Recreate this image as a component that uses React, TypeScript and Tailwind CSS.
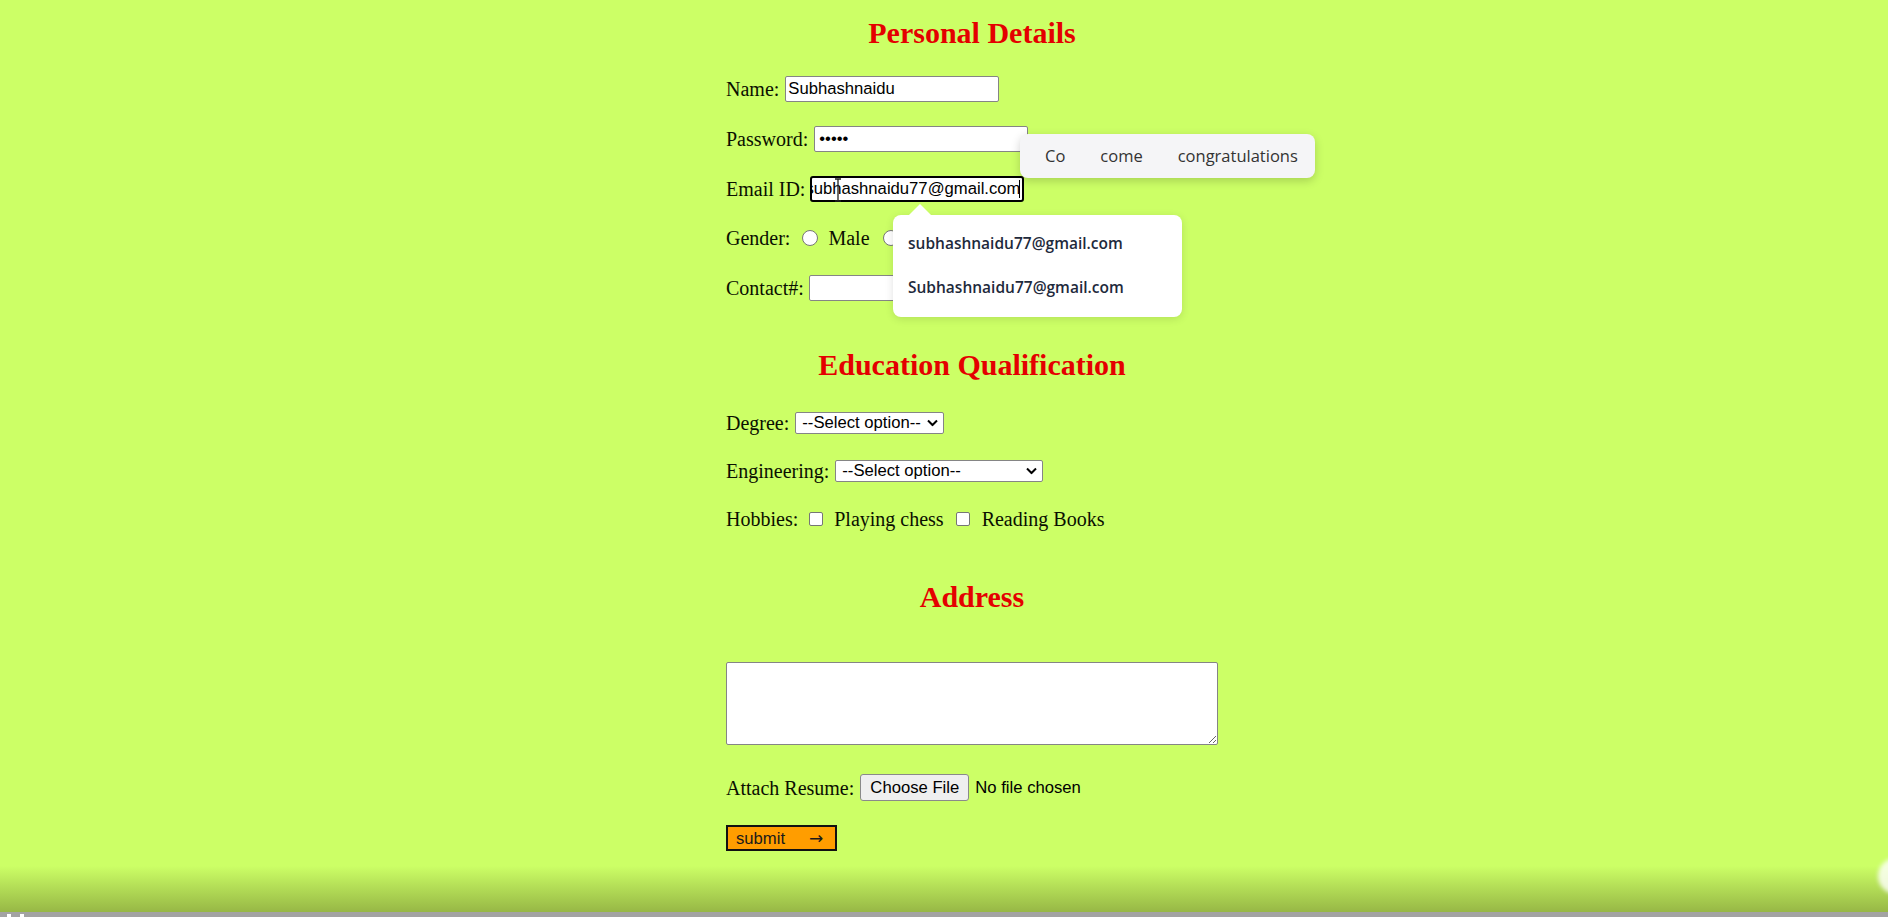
import React from "react";

const fieldCls =
  "h-[26px] w-[214px] rounded-[2px] border border-[#858585] bg-white px-[2px] font-['Liberation_Sans',Arial,sans-serif] text-[16.67px] text-black outline-none";

const Heading: React.FC<{ children: React.ReactNode; className?: string }> = ({ children, className = "" }) => (
  <h2 className={`text-center text-[30px] font-bold leading-[34px] text-[#e40000] ${className}`}>{children}</h2>
);

const Chevron = () => (
  <svg width="11" height="7" viewBox="0 0 11 7" className="pointer-events-none absolute right-[6px] top-1/2 -translate-y-1/2">
    <path d="M1 1 L5.5 5.5 L10 1" fill="none" stroke="#000" strokeWidth="2" />
  </svg>
);

const FakeSelect: React.FC<{ width: string }> = ({ width }) => (
  <div className={`relative ml-[6px] h-[22px] ${width}`}>
    <select
      defaultValue=""
      className="block h-full w-full appearance-none rounded-[2px] border border-[#858585] bg-white pl-[6px] font-['Liberation_Sans',Arial,sans-serif] text-[16.67px] leading-[20px] text-black outline-none"
    >
      <option value="">--Select option--</option>
    </select>
    <Chevron />
  </div>
);

const radioCls = "h-[16px] w-[16px] appearance-none rounded-full border border-[#767676] bg-white";
const checkCls = "h-[14px] w-[14px] appearance-none rounded-[2px] border border-[#767676] bg-white";

export default function App() {
  return (
    <div className="relative min-h-screen overflow-hidden bg-[#ccff66] font-['Liberation_Serif','Times_New_Roman',serif] text-[20px] text-[#0a0f00]">
      <div className="pl-[726px] pt-[16px]">
        <form className="w-[492px]" onSubmit={(e) => e.preventDefault()}>
          <Heading>Personal Details</Heading>

          <div className="mt-[26px] flex flex-col gap-[23.75px]">
            <div className="flex h-[26px] items-center">
              <label>Name:</label>
              <input className={`${fieldCls} ml-[6px] w-[213px]`} defaultValue="Subhashnaidu" />
            </div>
            <div className="flex h-[26px] items-center">
              <label>Password:</label>
              <input type="password" className={`${fieldCls} ml-[6px] pl-[4px]`} defaultValue="12345" />
            </div>
            <div className="flex h-[26px] items-center">
              <label>Email ID:</label>
              {/* focused field, scrolled to the end of the value */}
              <div className="relative ml-[5px] flex h-[26px] w-[214px] items-center justify-end overflow-hidden rounded-[3px] border-2 border-black bg-white font-['Liberation_Sans',Arial,sans-serif] text-[16.67px] whitespace-nowrap text-black">
                <span className="-mr-[1px]">subhashnaidu77@gmail.com</span>
                <span className="mr-[2px] h-[18px] w-[1px] shrink-0 bg-black" />
              </div>
            </div>
            <div className="flex h-[26px] items-center">
              <label>Gender:</label>
              <input type="radio" name="gender" className={`${radioCls} ml-[12px]`} />
              <span className="ml-[10px]">Male</span>
              <input type="radio" name="gender" className={`${radioCls} ml-[13px]`} />
              <span className="ml-[10px]">Female</span>
            </div>
            <div className="flex h-[26px] items-center">
              <label>Contact#:</label>
              <input className={`${fieldCls} ml-[5px]`} />
            </div>
          </div>

          <Heading className="mt-[47px]">Education Qualification</Heading>

          <div className="mt-[29px] flex flex-col gap-[24px]">
            <div className="flex h-[24px] items-center">
              <label>Degree:</label>
              <FakeSelect width="w-[149px]" />
            </div>
            <div className="flex h-[24px] items-center">
              <label>Engineering:</label>
              <FakeSelect width="w-[208px]" />
            </div>
            <div className="flex h-[24px] items-center">
              <label>Hobbies:</label>
              <input type="checkbox" className={`${checkCls} ml-[11px]`} />
              <span className="ml-[11px]">Playing chess</span>
              <input type="checkbox" className={`${checkCls} ml-[12px]`} />
              <span className="ml-[12px]">Reading Books</span>
            </div>
          </div>

          <Heading className="mt-[49px]">Address</Heading>

          <textarea className="mt-[48px] block h-[83px] w-[492px] rounded-[2px] border border-[#858585] bg-white outline-none" />

          <div className="mt-[29px] flex h-[27px] items-center">
            <label>Attach Resume:</label>
            <button
              type="button"
              className="ml-[6px] h-[27px] w-[109px] rounded-[3px] border border-[#8a8a8a] bg-[#efefef] font-['Liberation_Sans',Arial,sans-serif] text-[16.67px] text-black"
            >
              Choose File
            </button>
            <span className="ml-[6px] font-['Liberation_Sans',Arial,sans-serif] text-[16.67px] text-black">No file chosen</span>
          </div>

          <button
            type="submit"
            className="mt-[24px] flex h-[26px] w-[111px] items-center border-2 border-[#111] bg-[#ff9d00] pl-[8px] font-['Liberation_Sans',Arial,sans-serif] text-[16.67px] text-[#1a1a1a]"
          >
            submit
            <span className="ml-[24px] font-['DejaVu_Sans',sans-serif] text-[17px] leading-none">→</span>
          </button>
        </form>
      </div>

      {/* mouse I-beam over the email field */}
      <svg width="8" height="24" viewBox="0 0 8 24" className="absolute left-[834px] top-[178px]">
        <path d="M1 1 H7 M4 1 V23 M1 23 H7" fill="none" stroke="#222" strokeWidth="1.3" />
      </svg>

      {/* word suggestion strip */}
      <div className="absolute left-[1020px] top-[134px] flex h-[44px] w-[295px] items-center gap-[35px] rounded-[8px] bg-[#f5f5f7] pl-[25px] font-['Open_Sans','Noto_Sans',sans-serif] text-[16.5px] text-[#333] shadow-[0_3px_10px_rgba(0,0,0,0.18)]">
        <span>Co</span>
        <span>come</span>
        <span>congratulations</span>
      </div>

      {/* autofill dropdown */}
      <div className="absolute left-[893px] top-[215px] h-[102px] w-[289px] rounded-[8px] bg-white font-['Open_Sans','Noto_Sans',sans-serif] text-[15.5px] font-semibold text-[#1e2a3c] shadow-[0_2px_8px_rgba(0,0,0,0.12)]">
        <div className="absolute left-[16px] top-[-11px] h-0 w-0 border-x-[11px] border-b-[11px] border-x-transparent border-b-white" />
        <div className="flex h-[56px] items-center pl-[15px] pt-[2px]">subhashnaidu77@gmail.com</div>
        <div className="flex h-[34px] items-center pl-[15px]">Subhashnaidu77@gmail.com</div>
      </div>

      {/* video player overlay at the bottom */}
      <div className="absolute left-0 right-0 top-[866px] h-[47px] bg-linear-to-b from-[#ccff66] to-[#96b645]" />
      <div className="absolute left-0 right-0 top-[912px] h-[5px] bg-[#a3a3a3]">
        <div className="absolute left-[7px] top-[2px] h-[3px] w-[4px] bg-white" />
        <div className="absolute left-[20px] top-[2px] h-[3px] w-[4px] bg-white" />
      </div>
      <div className="absolute left-[1878px] top-[858px] h-[36px] w-[36px] rounded-full bg-white/80 blur-[2px]" />
    </div>
  );
}
